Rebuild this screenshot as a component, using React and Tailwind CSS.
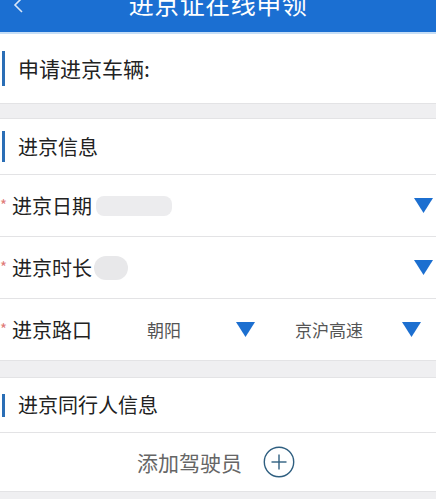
import React from "react";

const font = { fontFamily: '"Noto Sans CJK SC", "Noto Sans", sans-serif' };

function Tri({ className = "" }) {
  return (
    <svg width="19" height="15" viewBox="0 0 19 15" className={className}>
      <polygon points="0,0 19,0 9.5,15" fill="#1c6fd0" />
    </svg>
  );
}

function Row({ label, children, right }) {
  return (
    <div className="relative flex h-[62px] items-center border-b border-[#e3e3e5] bg-white">
      <span className="absolute left-[0px] top-[22px] text-[15px] leading-none text-[#e07a78]">*</span>
      <span className="ml-[12px] text-[20px] leading-none text-[#222]">{label}</span>
      {children}
      {right}
    </div>
  );
}

export default function App() {
  return (
    <div className="w-[436px] h-[499px] overflow-hidden bg-[#efeff1]" style={font}>
      {/* header */}
      <div className="relative h-[34px] overflow-hidden bg-[#1b6fd2] border-b-2 border-[#c6def6]">
        <svg width="12" height="16" viewBox="0 0 12 16" className="absolute left-[13px] top-[-3px]">
          <polyline points="9,1 2,8 9,15" fill="none" stroke="#d7e6f8" strokeWidth="1.6" />
        </svg>
        <div className="mt-[-9px] text-center text-[25px] leading-[25px] text-white tracking-[0.5px]">进京证在线申领</div>
      </div>

      {/* section 1 */}
      <div className="flex h-[70px] items-center bg-white border-b border-[#e3e3e5]">
        <div className="ml-[2px] h-[35px] w-[3px] bg-[#2a6eb6]" />
        <span className="ml-[13px] text-[21px] leading-none text-[#222]">申请进京车辆:</span>
      </div>

      <div className="h-[14px]" />

      {/* section 2 */}
      <div className="border-t border-[#e3e3e5]">
        <div className="flex h-[56px] items-center bg-white border-b border-[#e3e3e5]">
          <div className="ml-[2px] h-[31px] w-[3px] bg-[#2a6eb6]" />
          <span className="ml-[13px] text-[20px] leading-none text-[#222]">进京信息</span>
        </div>
        <Row label="进京日期" right={<Tri className="ml-auto mr-[3px]" />}>
          <div className="ml-[4px] h-[20px] w-[76px] rounded-[8px] bg-[#ececee]" />
        </Row>
        <Row label="进京时长" right={<Tri className="ml-auto mr-[3px]" />}>
          <div className="ml-[2px] h-[24px] w-[34px] rounded-full bg-[#e8e8ea]" />
        </Row>
        <Row label="进京路口">
          <span className="ml-[55px] text-[17px] leading-none text-[#555]">朝阳</span>
          <Tri className="ml-[55px]" />
          <span className="ml-[40px] text-[17px] leading-none text-[#555]">京沪高速</span>
          <Tri className="ml-[39px]" />
        </Row>
      </div>

      <div className="h-[16px]" />

      {/* section 3 */}
      <div className="border-t border-[#e3e3e5]">
        <div className="flex h-[55px] items-center bg-white border-b border-[#e3e3e5]">
          <div className="ml-[2px] h-[23px] w-[3px] bg-[#2a6eb6]" />
          <span className="ml-[13px] text-[20px] leading-none text-[#222]">进京同行人信息</span>
        </div>
        <div className="flex h-[59px] items-center justify-center bg-white border-b border-[#e3e3e5]">
          <div className="ml-[-4px] flex items-center">
            <span className="text-[21px] leading-none text-[#666]">添加驾驶员</span>
            <svg width="32" height="32" viewBox="0 0 32 32" className="ml-[21px]">
              <circle cx="16" cy="16" r="14.7" fill="none" stroke="#2f5f80" strokeWidth="1.4" />
              <line x1="8.5" y1="16" x2="23.5" y2="16" stroke="#2f5f80" strokeWidth="1.4" />
              <line x1="16" y1="8.5" x2="16" y2="23.5" stroke="#2f5f80" strokeWidth="1.4" />
            </svg>
          </div>
        </div>
      </div>
    </div>
  );
}
